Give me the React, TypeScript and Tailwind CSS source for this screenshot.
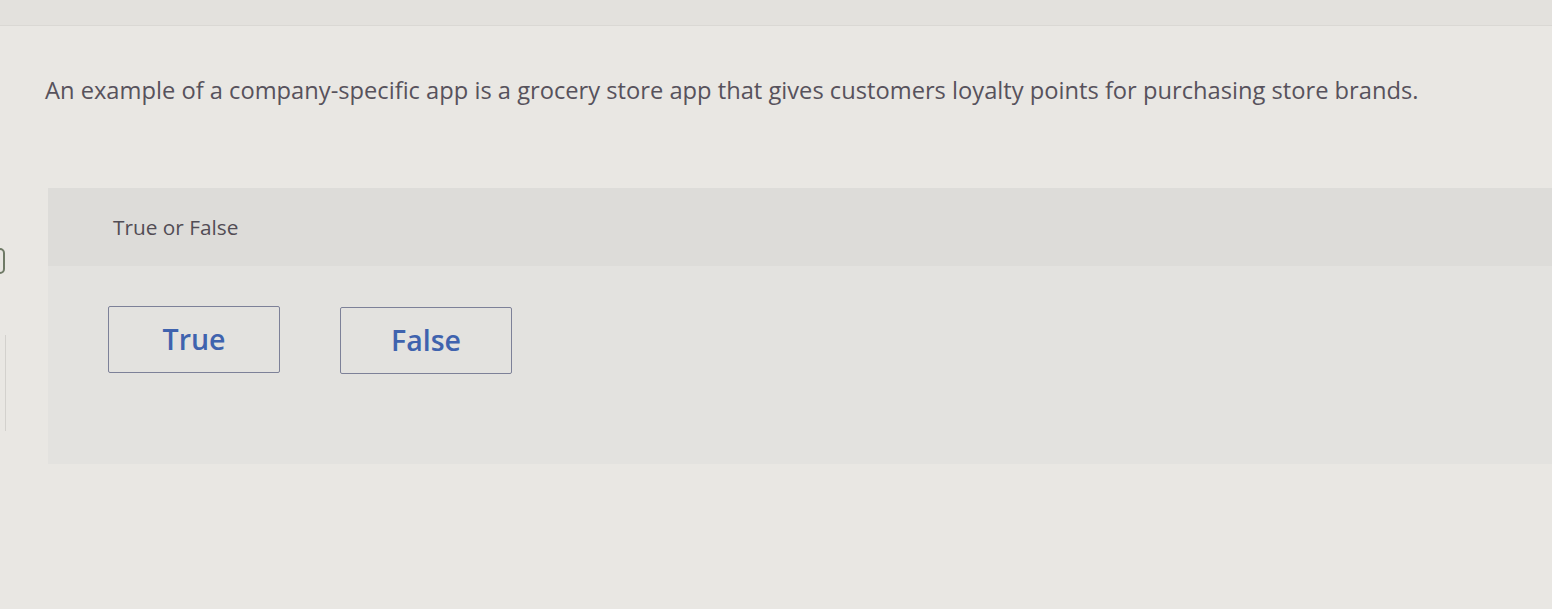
export default function App() {
  return (
    <div className="w-[1552px] h-[609px] overflow-hidden bg-[#e9e7e3] font-['Open_Sans',sans-serif] flex flex-col">
      <div className="h-[26px] bg-[#e3e1dd] border-b border-[#dad8d4]" />
      <div className="flex">
        <div className="w-[45px] shrink-0 relative">
          <div className="absolute left-[-6px] top-[222px] w-[11px] h-[26px] rounded-[5px] border-2 border-[#6f7a66]" />
          <div className="absolute left-0 top-[309px] w-[6px] h-[96px] border-r border-[#d3d1cd]" />
        </div>
        <div className="flex-1 flex flex-col">
          <p className="mt-[48px] text-[23.7px] leading-[32px] text-[#57525c]">
            An example of a company-specific app is a grocery store app that gives customers loyalty points for purchasing store brands.
          </p>
          <div className="mt-[82px] ml-[3px] flex flex-col">
            <div className="h-[78px] bg-[#dddcd9] pl-[65px] pt-[24px]">
              <span className="text-[20.8px] text-[#524d55]">True or False</span>
            </div>
            <div className="h-[198px] bg-[#e3e2df] pl-[60px] pt-[40px] flex gap-[60px] items-start">
              <button className="w-[172px] h-[67px] border-[1.5px] border-[#7d8198] rounded-[2px] text-[28.5px] font-semibold text-[#3f63ae]">
                True
              </button>
              <button className="w-[172px] h-[67px] mt-[1px] border-[1.5px] border-[#7d8198] rounded-[2px] text-[28.5px] font-semibold text-[#3f63ae]">
                False
              </button>
            </div>
          </div>
        </div>
      </div>
    </div>
  )
}
